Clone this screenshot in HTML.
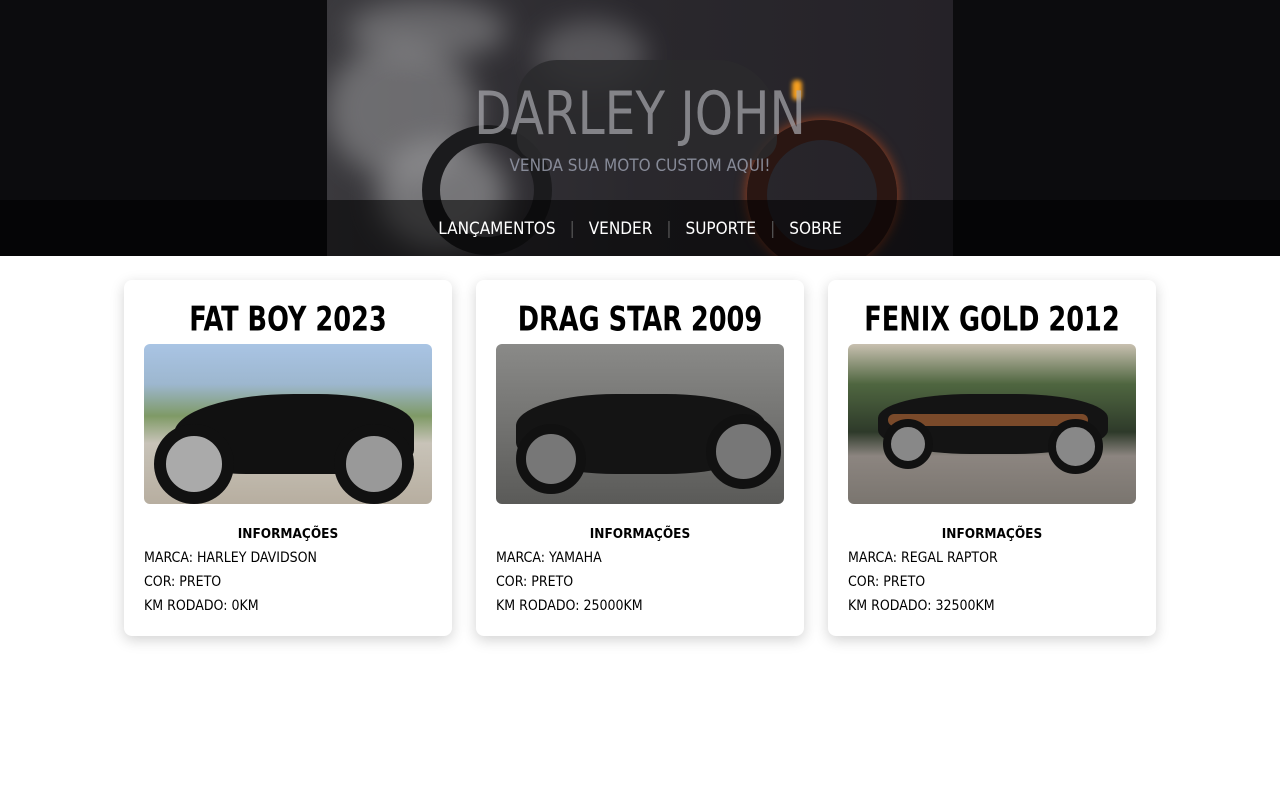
<!DOCTYPE html>
<html><head><meta charset="utf-8"><style>
*{margin:0;padding:0;box-sizing:border-box}
body{width:1280px;height:800px;background:#fff;font-family:"DejaVu Sans Condensed","Liberation Sans",sans-serif;overflow:hidden}
header{position:relative;height:256px;background:#0c0c0e;overflow:hidden}
.hero{position:absolute;left:327px;top:0;width:626px;height:256px;background:linear-gradient(90deg,#3a393d 0%,#2a282d 50%,#252228 100%);overflow:hidden}
.blob{position:absolute;border-radius:50%;background:#9a9a9c;filter:blur(14px);opacity:.55}
.bike{position:absolute;border-radius:50%}
h1{position:absolute;top:82px;width:100%;text-align:center;font-size:54px;font-weight:normal;color:rgba(170,170,175,.7);transform:scaleY(1.1)}
.sub{position:absolute;top:156px;width:100%;text-align:center;font-size:17px;color:rgba(150,155,170,.85)}
nav{position:absolute;top:200px;left:0;width:100%;height:56px;background:rgba(0,0,0,.55);text-align:center;line-height:58px;font-size:17px;color:#fff}
nav span.s{color:#555;margin:0 14px}
.cards{position:absolute;top:280px;left:124px;display:flex;gap:24px}
.card{width:328px;height:356px;background:#fff;border-radius:8px;box-shadow:0 4px 14px rgba(0,0,0,.18);padding:0 20px}
.card h2{font-size:28.5px;text-align:center;margin-top:18px;height:46px;line-height:44px;font-weight:bold;transform:scaleY(1.2)}
.img{width:288px;height:160px;border-radius:6px;position:relative;overflow:hidden}
.info{margin-top:18px;font-size:14px;line-height:24px;transform-origin:left top}
.info b{display:block;text-align:center;font-size:13.5px}
</style></head><body>
<header>
<div class="hero">
<div class="blob" style="left:0px;top:40px;width:150px;height:140px"></div>
<div class="blob" style="left:50px;top:140px;width:130px;height:110px;opacity:.65"></div>
<div class="blob" style="left:20px;top:0px;width:160px;height:60px;opacity:.5"></div>
<div class="blob" style="left:210px;top:20px;width:110px;height:70px;opacity:.4"></div>
<div class="bike" style="left:95px;top:125px;width:130px;height:130px;border:18px solid #1b1b1d"></div>
<div class="bike" style="left:420px;top:120px;width:150px;height:150px;border:20px solid #2a1612;box-shadow:0 0 12px #a0401c"></div>
<div style="position:absolute;left:190px;top:60px;width:260px;height:100px;background:#2a2a2d;border-radius:40px 60px 20px 20px;opacity:.85"></div>
<div style="position:absolute;left:465px;top:80px;width:10px;height:20px;background:#f6a020;border-radius:4px;filter:blur(2px)"></div>
</div>
<h1>DARLEY JOHN</h1>
<div class="sub">VENDA SUA MOTO CUSTOM AQUI!</div>
<nav>LANÇAMENTOS<span class="s">|</span>VENDER<span class="s">|</span>SUPORTE<span class="s">|</span>SOBRE</nav>
</header>
<div class="cards">
<div class="card"><h2>FAT BOY 2023</h2>
<div class="img" style="background:linear-gradient(#a9c4e4 0%,#9db7cf 25%,#7f9a66 45%,#c8c3b8 62%,#b7aea0 100%)">
<div style="position:absolute;left:30px;top:50px;width:240px;height:80px;background:#111;border-radius:50% 40% 30% 30%"></div>
<div style="position:absolute;left:10px;top:80px;width:80px;height:80px;border-radius:50%;border:12px solid #111;background:#aaa"></div>
<div style="position:absolute;left:190px;top:80px;width:80px;height:80px;border-radius:50%;border:12px solid #111;background:#999"></div></div>
<div class="info"><b>INFORMAÇÕES</b>MARCA: HARLEY DAVIDSON<br>COR: PRETO<br>KM RODADO: 0KM</div></div>
<div class="card"><h2>DRAG STAR 2009</h2>
<div class="img" style="background:linear-gradient(#8a8a88,#6e6e6c 60%,#5a5a58)">
<div style="position:absolute;left:20px;top:50px;width:250px;height:80px;background:#141414;border-radius:40%"></div>
<div style="position:absolute;left:20px;top:80px;width:70px;height:70px;border-radius:50%;border:10px solid #111;background:#777"></div>
<div style="position:absolute;left:210px;top:70px;width:75px;height:75px;border-radius:50%;border:10px solid #111;background:#777"></div></div>
<div class="info"><b>INFORMAÇÕES</b>MARCA: YAMAHA<br>COR: PRETO<br>KM RODADO: 25000KM</div></div>
<div class="card"><h2>FENIX GOLD 2012</h2>
<div class="img" style="background:linear-gradient(#c8c0b0 0%,#4f6640 25%,#2e3a2a 55%,#8c8580 70%,#7a756f 100%)">
<div style="position:absolute;left:30px;top:50px;width:230px;height:60px;background:#141414;border-radius:40%"></div>
<div style="position:absolute;left:40px;top:70px;width:200px;height:12px;background:#7a4a2a;border-radius:6px"></div>
<div style="position:absolute;left:35px;top:75px;width:50px;height:50px;border-radius:50%;border:8px solid #111;background:#888"></div>
<div style="position:absolute;left:200px;top:75px;width:55px;height:55px;border-radius:50%;border:8px solid #111;background:#888"></div></div>
<div class="info"><b>INFORMAÇÕES</b>MARCA: REGAL RAPTOR<br>COR: PRETO<br>KM RODADO: 32500KM</div></div>
</div>
</body></html>
